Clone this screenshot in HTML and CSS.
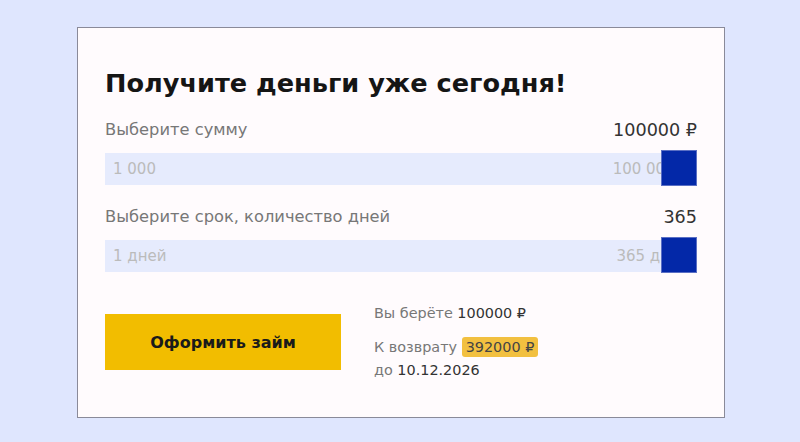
FILE: index.html
```html
<!DOCTYPE html>
<html lang="ru">
<head>
    <meta charset="UTF-8">
    <title>Получите деньги уже сегодня!</title>
    <link rel="stylesheet" href="styles.css">
</head>
<body>
<div class="card">
    <h1 class="title">Получите деньги уже сегодня!</h1>

    <div class="field">
        <div class="head">
            <span class="label">Выберите сумму</span>
            <span class="current">100000 ₽</span>
        </div>
        <div class="track">
            <span class="min">1 000</span>
            <span class="max">100 000 ₽</span>
            <span class="thumb"></span>
        </div>
    </div>

    <div class="field">
        <div class="head">
            <span class="label">Выберите срок, количество дней</span>
            <span class="current">365</span>
        </div>
        <div class="track">
            <span class="min">1 дней</span>
            <span class="max">365 дней</span>
            <span class="thumb"></span>
        </div>
    </div>

    <div class="bottom">
        <a class="button">Оформить займ</a>
        <div class="summary">
            <p class="take">Вы берёте <b>100000 ₽</b></p>
            <p class="back">К возврату <span class="badge">392000 ₽</span></p>
            <p class="date">до <b>10.12.2026</b></p>
        </div>
    </div>
</div>
</body>
</html>
```

FILE: styles.css
```css
*{padding:0;margin:0;box-sizing:border-box;}
body{background:#dfe6fe;font-family:"DejaVu Sans","Noto Sans",sans-serif;padding:27px 0 0 77px;height:442px;overflow:hidden;}
.card{width:648px;height:391px;background:#fffbfd;border:1px solid #8a8a99;padding:38px 27px 0 27px;}
.title{font-size:25.6px;font-weight:700;color:#151515;line-height:34px;}
.field{margin-top:22px;}
.field:first-of-type{margin-top:20px;}
.head{display:flex;justify-content:space-between;align-items:center;height:20px;line-height:20px;}
.label{font-size:16.3px;color:#777;}
.current{font-size:17.6px;color:#333;}
.track{position:relative;height:32px;margin-top:13px;background:#e6ebfd;display:flex;justify-content:space-between;align-items:center;padding:0 8px;font-size:15px;color:#bbb;}
.thumb{position:absolute;right:0;top:-3px;width:36px;height:36px;background:#0328a8;border:1px solid #5a6fc4;}
.bottom{display:flex;align-items:center;margin-top:30px;}
.button{display:flex;align-items:center;justify-content:center;width:236px;height:56px;background:#f2bd00;font-size:16px;font-weight:700;color:#1a1a1a;}
.summary{margin-left:33px;font-size:14.4px;line-height:23px;color:#777;}
.summary b{font-weight:400;color:#333;}
.take{margin-bottom:11px;}
.badge{background:#f2c040;color:#444;border-radius:3px;padding:2px 4px;}
```
